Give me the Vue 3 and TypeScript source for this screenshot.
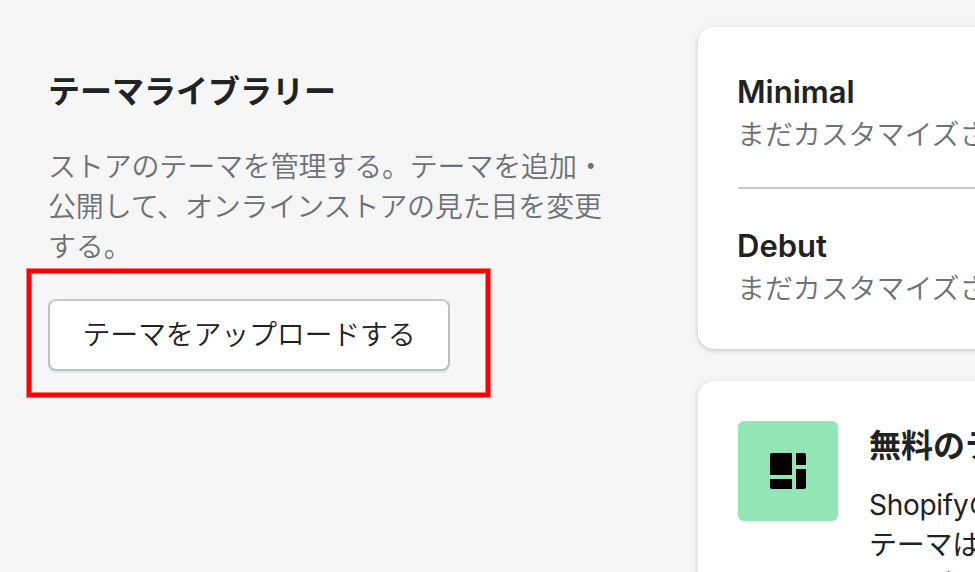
<script setup lang="ts">
interface Theme {
  name: string
  status: string
}

const description: string[] = [
  'ストアのテーマを管理する。テーマを追加・',
  '公開して、オンラインストアの見た目を変更',
  'する。',
]

const themes: Theme[] = [
  { name: 'Minimal', status: 'まだカスタマイズさ' },
  { name: 'Debut', status: 'まだカスタマイズさ' },
]

const freeThemes: string[] = ['Shopifyの', 'テーマは', 'ユーザー']
</script>

<template>
  <main class="page">
    <section class="intro">
      <h2 class="title">テーマライブラリー</h2>
      <p class="description">
        <span v-for="line in description" :key="line" class="line">{{ line }}</span>
      </p>
      <div class="highlight">
        <button type="button" class="upload">テーマをアップロードする</button>
      </div>
    </section>

    <section class="cards">
      <div class="card">
        <article v-for="theme in themes" :key="theme.name" class="theme">
          <h3 class="name">{{ theme.name }}</h3>
          <p class="status">{{ theme.status }}</p>
        </article>
      </div>
      <div class="card free">
        <div class="thumb">
          <svg width="36" height="36" viewBox="0 0 36 36" aria-hidden="true">
            <path d="M2 0H22V22H0V2A2 2 0 0 1 2 0Z" />
            <path d="M26 0H34A2 2 0 0 1 36 2V12H26Z" />
            <path d="M0 26H22V36H2A2 2 0 0 1 0 34Z" />
            <path d="M26 16H36V34A2 2 0 0 1 34 36H26Z" />
          </svg>
        </div>
        <div class="free-text">
          <h3 class="free-title">無料のテ</h3>
          <p class="free-body">
            <span v-for="line in freeThemes" :key="line" class="line">{{ line }}</span>
          </p>
        </div>
      </div>
    </section>
  </main>
</template>

<style>
body {
  background: #f6f6f6;
  overflow: hidden;
}
</style>

<style scoped>
.page {
  box-sizing: border-box;
  display: flex;
  width: 975px;
  height: 572px;
  overflow: hidden;
  background: #f6f6f6;
  color: #202223;
  font-family: Inter, 'Noto Sans CJK JP', sans-serif;
  font-size: 28px;
  line-height: 40px;
}

h2,
h3,
p {
  margin: 0;
}

.line {
  display: block;
  white-space: nowrap;
}

.intro {
  flex: none;
  box-sizing: border-box;
  width: 698px;
  padding: 72px 0 0 26px;
}

.title {
  padding-left: 22px;
  font-size: 32px;
  font-weight: 700;
  line-height: 40px;
}

.description {
  padding: 35px 0 0 22px;
  color: #6d7175;
  font-weight: 350;
  letter-spacing: -0.17px;
}

.highlight {
  box-sizing: border-box;
  width: 465px;
  height: 130px;
  margin-top: 1px;
  padding: 30px 21px;
  border: 1px solid #ff7878;
  box-shadow: inset 0 0 0 4px #ff0000, inset 0 0 0 5px #ff7878;
}

.upload {
  display: block;
  box-sizing: border-box;
  width: 402px;
  height: 72px;
  padding: 0;
  border: 2px solid #babfc3;
  border-top-color: #c9cccf;
  border-radius: 8px;
  background: #ffffff;
  box-shadow: 0 2px 0 rgba(0, 0, 0, 0.05);
  color: #202223;
  font: inherit;
  font-weight: 350;
  letter-spacing: -0.25px;
}

.cards {
  flex: none;
  display: flex;
  flex-direction: column;
  gap: 32px;
  width: 420px;
  padding-top: 27px;
}

.card {
  flex: none;
  box-sizing: border-box;
  border-radius: 16px;
  background: #ffffff;
  box-shadow: 0 0 10px rgba(23, 24, 24, 0.05), 0 2px 4px rgba(0, 0, 0, 0.15);
  padding: 0 40px;
}

.theme {
  box-sizing: border-box;
  height: 160px;
  padding-top: 45px;
  white-space: nowrap;
}

.theme + .theme {
  height: 162px;
  padding-top: 37px;
  border-top: 2px solid #c9cccf;
}

.name {
  margin-left: -1px;
  font-size: 31px;
  font-weight: 600;
  line-height: 40px;
  letter-spacing: 0;
}

.status {
  padding-top: 3px;
  margin-left: -1px;
  color: #6d7175;
  font-weight: 350;
  letter-spacing: -0.1px;
}

.free {
  display: flex;
  gap: 32px;
  height: 300px;
  padding: 40px;
}

.thumb {
  flex: none;
  display: flex;
  align-items: center;
  justify-content: center;
  width: 100px;
  height: 100px;
  border-radius: 6px;
  background: #92e6b5;
}

.free-title {
  padding-top: 5px;
  margin-left: -1px;
  font-size: 32px;
  font-weight: 700;
  line-height: 40px;
  white-space: nowrap;
}

.free-body {
  padding-top: 19px;
  margin-left: -1px;
  font-weight: 390;
  letter-spacing: -0.28px;
}

.free-body .line:last-child {
  margin-top: -1px;
}
</style>
